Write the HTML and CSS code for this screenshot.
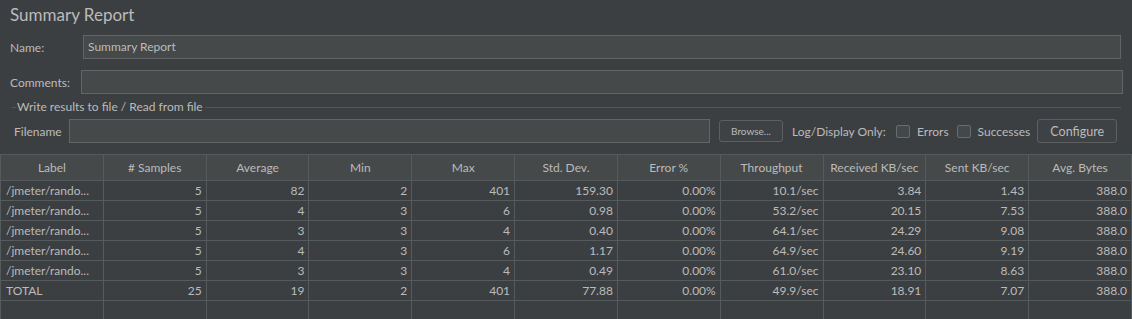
FILE: index.html
```html
<!DOCTYPE html>
<html>
<head>
<meta charset="utf-8">
<link rel="stylesheet" href="styles.css">
</head>
<body>
<div class="page">
  <div class="title">Summary Report</div>
  <div class="form-row name-row">
    <span class="label name-label">Name:</span>
    <div class="field">Summary Report</div>
  </div>
  <div class="form-row comments-row">
    <span class="label comments-label">Comments:</span>
    <div class="field"></div>
  </div>
  <div class="group-title">
    <span class="gline short"></span>
    <span class="gtext">Write results to file / Read from file</span>
    <span class="gline long"></span>
  </div>
  <div class="form-row file-row">
    <span class="label file-label">Filename</span>
    <div class="field file-field"></div>
    <button class="btn browse">Browse...</button>
    <span class="log-label">Log/Display Only:</span>
    <span class="check"></span><span class="check-label errors">Errors</span>
    <span class="check"></span><span class="check-label">Successes</span>
    <button class="btn configure">Configure</button>
  </div>
  <table class="grid">
    <thead>
      <tr>
        <th>Label</th><th># Samples</th><th>Average</th><th>Min</th><th>Max</th><th>Std. Dev.</th><th>Error %</th><th>Throughput</th><th>Received KB/sec</th><th>Sent KB/sec</th><th>Avg. Bytes</th>
      </tr>
    </thead>
    <tbody>
      <tr><td class="lbl">/jmeter/rando...</td><td>5</td><td>82</td><td>2</td><td>401</td><td>159.30</td><td>0.00%</td><td>10.1/sec</td><td>3.84</td><td>1.43</td><td>388.0</td></tr>
      <tr><td class="lbl">/jmeter/rando...</td><td>5</td><td>4</td><td>3</td><td>6</td><td>0.98</td><td>0.00%</td><td>53.2/sec</td><td>20.15</td><td>7.53</td><td>388.0</td></tr>
      <tr><td class="lbl">/jmeter/rando...</td><td>5</td><td>3</td><td>3</td><td>4</td><td>0.40</td><td>0.00%</td><td>64.1/sec</td><td>24.29</td><td>9.08</td><td>388.0</td></tr>
      <tr><td class="lbl">/jmeter/rando...</td><td>5</td><td>4</td><td>3</td><td>6</td><td>1.17</td><td>0.00%</td><td>64.9/sec</td><td>24.60</td><td>9.19</td><td>388.0</td></tr>
      <tr><td class="lbl">/jmeter/rando...</td><td>5</td><td>3</td><td>3</td><td>4</td><td>0.49</td><td>0.00%</td><td>61.0/sec</td><td>23.10</td><td>8.63</td><td>388.0</td></tr>
      <tr><td class="lbl">TOTAL</td><td>25</td><td>19</td><td>2</td><td>401</td><td>77.88</td><td>0.00%</td><td>49.9/sec</td><td>18.91</td><td>7.07</td><td>388.0</td></tr>
      <tr class="empty"><td></td><td></td><td></td><td></td><td></td><td></td><td></td><td></td><td></td><td></td><td></td></tr>
    </tbody>
  </table>
</div>
</body>
</html>
```
FILE: styles.css
```css
html, body {
  margin: 0;
  padding: 0;
  background: #3c3f41;
}
body {
  width: 1132px;
  height: 319px;
  overflow: hidden;
  color: #bbbbbb;
  font-family: "Lato", "Open Sans", sans-serif;
  font-size: 12px;
}
.page {
  display: flex;
  flex-direction: column;
}
.title {
  height: 35px;
  line-height: 30px;
  padding-left: 10px;
  font-size: 17px;
}
.form-row {
  display: flex;
  align-items: center;
  height: 24px;
}
.label {
  flex: none;
  padding-left: 10px;
  box-sizing: border-box;
}
.name-label { width: 83px; }
.comments-label { width: 81px; }
.name-row { margin-right: 11px; }
.comments-row { margin-top: 11px; margin-right: 9px; }
.field {
  flex: 1;
  height: 24px;
  box-sizing: border-box;
  background: #45494a;
  border: 1px solid #646464;
  padding-left: 4px;
  line-height: 22px;
  color: #bbbbbb;
}
.group-title {
  display: flex;
  align-items: center;
  height: 16px;
  margin-top: 5px;
  padding-left: 12px;
  margin-right: 11px;
}
.gline {
  height: 1px;
  background: #555759;
}
.gline.short { width: 4px; margin-right: 1px; }
.gline.long { flex: 1; margin-left: 2px; }
.gtext { line-height: 16px; }
.file-row {
  margin-top: 4px;
}
.file-label {
  width: 69px;
  padding-left: 14px;
}
.file-field {
  flex: none;
  width: 641px;
}
.btn {
  box-sizing: border-box;
  background: #3f4244;
  border: 1px solid #5e6060;
  border-radius: 3px;
  color: #bbbbbb;
  font-family: "Lato", "Open Sans", sans-serif;
  padding: 0;
}
.browse {
  margin-left: 9px;
  width: 64px;
  height: 22px;
  font-size: 10px;
}
.log-label {
  margin-left: 9px;
  width: 104px;
}
.check {
  flex: none;
  width: 14px;
  height: 13px;
  box-sizing: border-box;
  background: #43494a;
  border: 1px solid #6b6b6b;
  border-radius: 2px;
}
.check-label {
  margin-left: 7px;
  margin-right: 11px;
}
.check-label.errors { margin-right: 8px; }
.configure {
  margin-left: -4px;
  width: 80px;
  height: 24px;
  font-size: 12.5px;
}
.grid {
  margin-top: 11px;
  width: 1132px;
  table-layout: fixed;
  border-collapse: collapse;
}
.grid th, .grid td {
  border: 1px solid #555a5c;
  overflow: hidden;
  white-space: nowrap;
  font-weight: normal;
}
.grid th {
  height: 25px;
  padding: 0;
  background: #45494a;
  text-align: center;
}
.grid td {
  height: 19px;
  padding: 0 4px 0 3px;
  text-align: right;
  line-height: 18px;
}
.grid td.lbl {
  text-align: left;
  padding-left: 5px;
}
.grid tr.empty td { height: 19px; }
```
